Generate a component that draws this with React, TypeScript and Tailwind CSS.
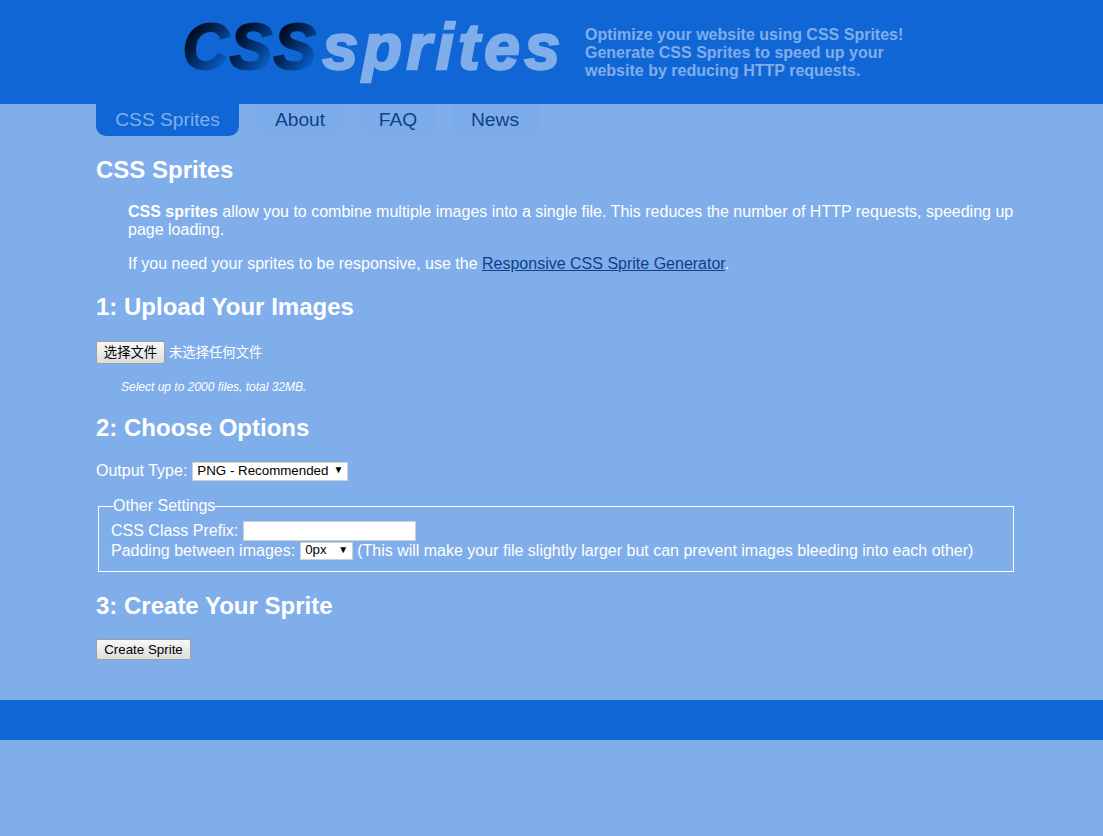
const tabs = [
  { label: "About", width: "w-[88px]" },
  { label: "FAQ", width: "w-[76px]" },
  { label: "News", width: "w-[86px]" },
];

export default function App() {
  return (
    <div className="min-h-[836px] bg-[#80aeeb] font-['Liberation_Sans',Arial,sans-serif] text-base leading-[18px] text-white">
      {/* Header */}
      <header className="flex h-[104px] bg-[#1166d6] pl-[182px]">
        <div className="mt-[7px] h-[80px] w-[403px] text-[64px] font-bold italic leading-[80px]">
          {["C", "S", "S"].map((letter, i) => (
            <span
              key={i}
              className="mx-[-4.5px] bg-gradient-to-br from-[#00102a] from-30% to-[#0a58bc] to-75% bg-clip-text px-[5px] text-transparent [-webkit-text-stroke:2px_transparent]"
            >
              {letter}
            </span>
          ))}
          <span className="ml-[6px] tracking-[4.6px] text-[#80aeeb] [-webkit-text-stroke:2.5px_#80aeeb]">sprites</span>
        </div>
        <p className="mt-[26px] w-[340px] text-base font-bold leading-[18px] text-[#80aeeb]">
          Optimize your website using CSS Sprites! Generate CSS Sprites to speed up your website by reducing HTTP requests.
        </p>
      </header>

      {/* Tabs */}
      <nav className="flex gap-[16px] pl-[96px]">
        <a className="mr-[1px] flex h-[32px] w-[143px] items-center justify-center rounded-b-[10px] bg-[#1166d6] pb-[1px] text-[19.2px] text-[#80aeeb]">CSS Sprites</a>
        {tabs.map((tab) => (
          <a
            key={tab.label}
            className={`flex h-[32px] ${tab.width} items-center justify-center rounded-b-[10px] bg-[#7cabe9] pb-[1px] text-[19.2px] text-[#0f3f88]`}
          >
            {tab.label}
          </a>
        ))}
      </nav>

      <main className="ml-[96px] w-[918px]">
        <h1 className="mt-[20px] text-2xl font-bold leading-[28px]">CSS Sprites</h1>
        <p className="mt-[19px] pl-[32px]">
          <b>CSS sprites</b> allow you to combine multiple images into a single file. This reduces the number of HTTP requests, speeding up page loading.
        </p>
        <p className="mt-[16px] pl-[32px]">
          If you need your sprites to be responsive, use the{" "}
          <a className="text-[#0f3f88] underline">Responsive CSS Sprite Generator</a>.
        </p>

        <h2 className="mt-[20px] text-2xl font-bold leading-[28px]">1: Upload Your Images</h2>
        <div className="mt-[20px] flex h-[23px] items-center gap-[4px] font-['Liberation_Sans','Noto_Sans_CJK_SC',sans-serif] text-[13.33px]">
          <button className="h-[23px] w-[69px] rounded-[2px] border border-[#a0a0a0] bg-gradient-to-b from-[#f8f8f8] to-[#dddddd] text-[13.33px] text-black">选择文件</button>
          <span>未选择任何文件</span>
        </div>
        <p className="mt-[16px] pl-[25px] text-xs italic leading-[14px]">Select up to 2000 files, total 32MB.</p>

        <h2 className="mt-[20px] text-2xl font-bold leading-[28px]">2: Choose Options</h2>
        <div className="mt-[19px] flex h-[20px] items-center gap-[5px]">
          <span>Output Type:</span>
          <div className="relative h-[19px] w-[156px] border border-[#d0d0d0] bg-white">
            <select className="mt-[-1px] block h-[17px] w-full appearance-none bg-transparent pl-[4px] text-[13.33px] leading-[15px] text-black">
              <option>PNG - Recommended</option>
            </select>
            <span className="pointer-events-none absolute right-[4px] top-[1px] text-[10px] leading-[11px] text-black">▼</span>
          </div>
        </div>

        <fieldset className="ml-[2px] mt-[16px] h-[75px] border border-white px-[12px]">
          <legend className="ml-[2px] leading-[18px]">Other Settings</legend>
          <div className="mt-[5px] flex h-[21px] items-center gap-[5px]">
            <label>CSS Class Prefix:</label>
            <input className="h-[20px] w-[173px] border border-[#d0d0d0] bg-white" />
          </div>
          <div className="flex h-[20px] items-center gap-[5px]">
            <label>Padding between images:</label>
            <div className="relative h-[18px] w-[53px] border border-[#d0d0d0] bg-white">
              <select className="mt-[-1px] block h-[16px] w-full appearance-none bg-transparent pl-[4px] text-[13.33px] leading-[14px] text-black">
                <option>0px</option>
              </select>
              <span className="pointer-events-none absolute right-[4px] top-[1px] text-[10px] leading-[11px] text-black">▼</span>
            </div>
            <span className="ml-[-1px]">(This will make your file slightly larger but can prevent images bleeding into each other)</span>
          </div>
        </fieldset>

        <h2 className="mt-[20px] text-2xl font-bold leading-[28px]">3: Create Your Sprite</h2>
        <button className="mt-[19px] block h-[21px] w-[95px] rounded-[2px] border border-[#a0a0a0] bg-gradient-to-b from-[#f8f8f8] to-[#dddddd] text-[13.33px] leading-[18px] text-black">Create Sprite</button>
      </main>

      {/* Footer */}
      <footer className="mt-[40px] h-[40px] bg-[#1166d6]" />
    </div>
  );
}
